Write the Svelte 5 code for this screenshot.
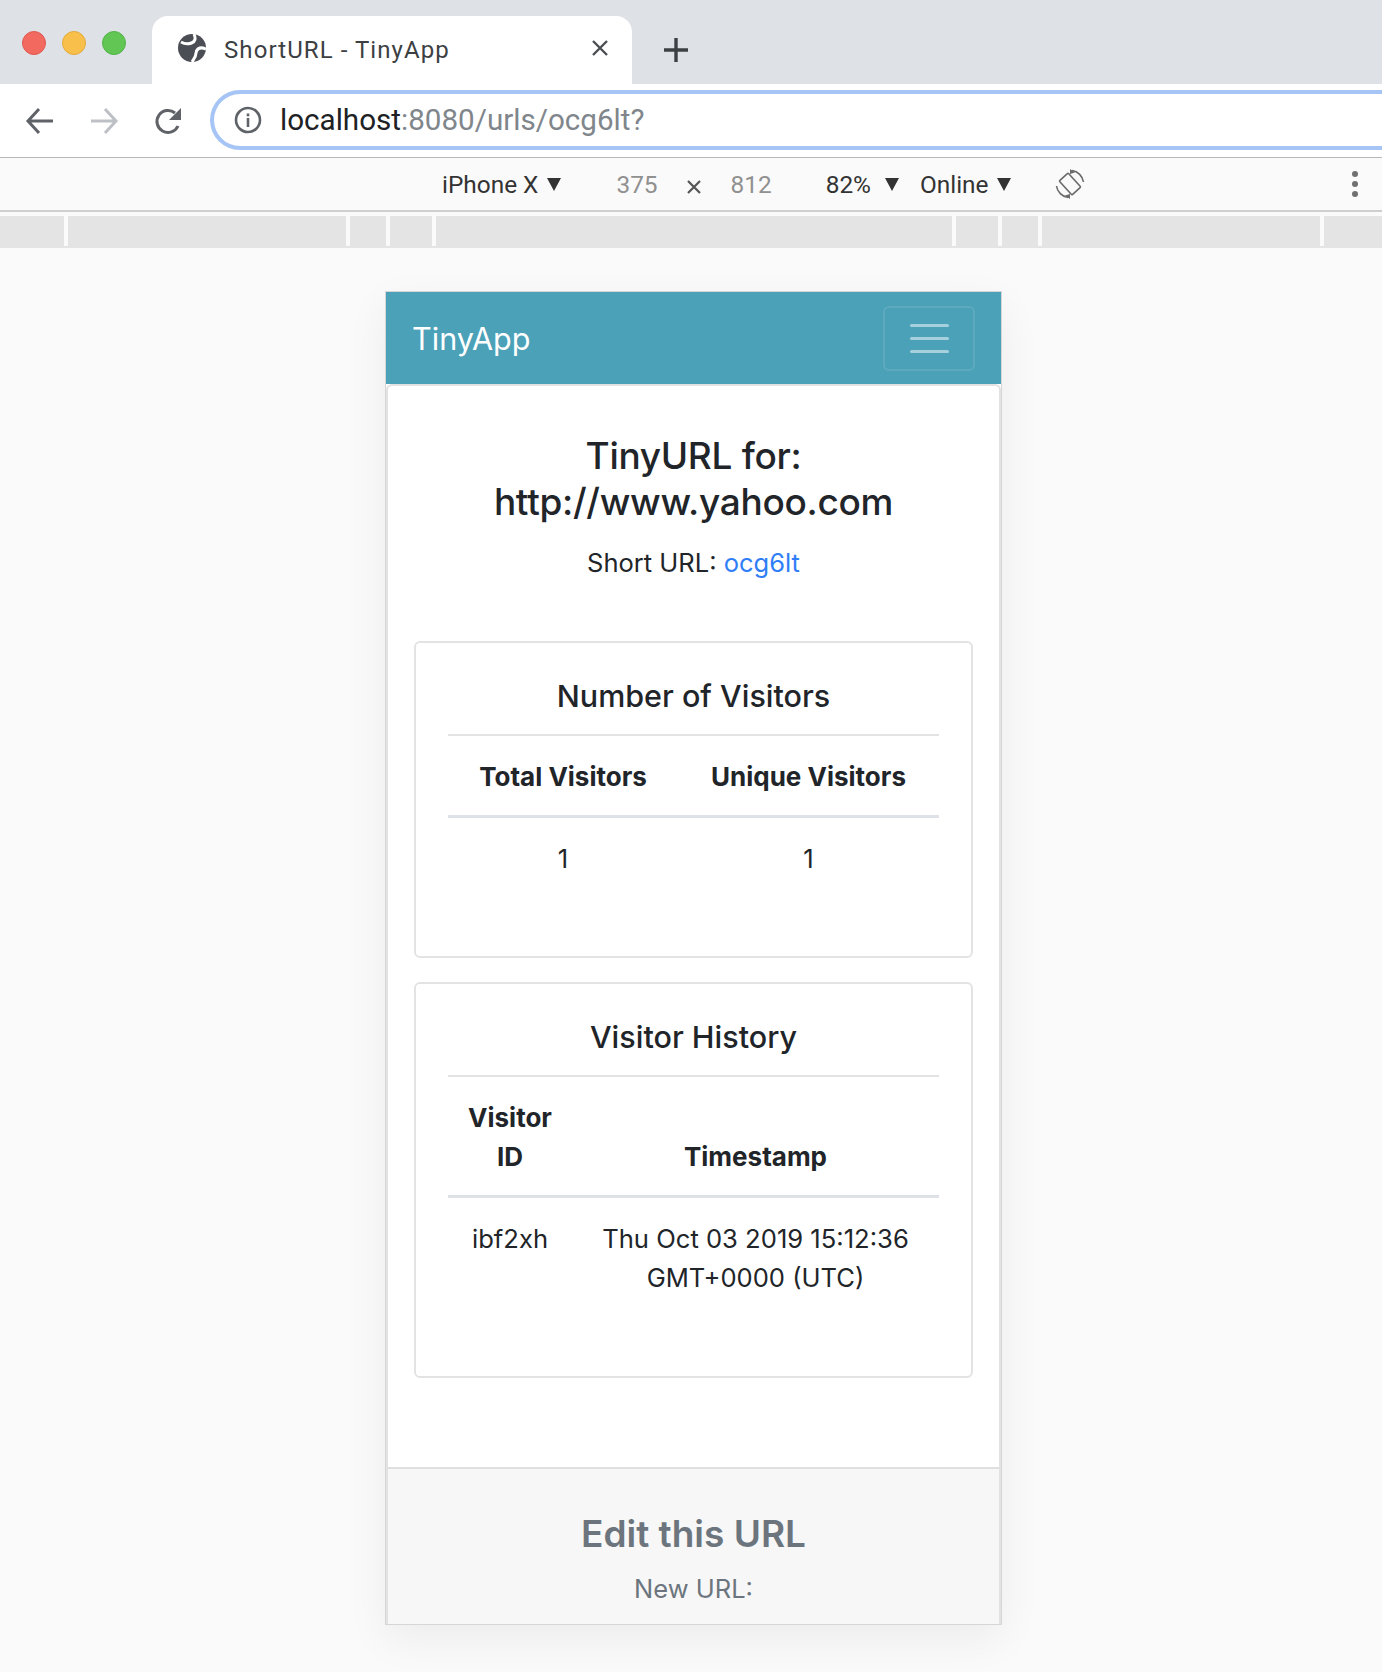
<script>
  const rulerTicks = [68, 282, 40, 46, 520, 46, 40, 282];
  const visitorCols = ['Total Visitors', 'Unique Visitors'];
</script>

<div class="page">
  <div class="tabstrip">
    <div class="lights">
      <span class="light red"></span>
      <span class="light yellow"></span>
      <span class="light green"></span>
    </div>
    <div class="tab">
      <svg class="globe" width="28" height="28" viewBox="0 0 28 28">
        <circle cx="14" cy="14" r="14" fill="#4b4e54" />
        <path d="M16 0 Q19 7 13.5 9 Q8 11 3 8" fill="none" stroke="#fff" stroke-width="3" />
        <path d="M28 15 Q21 12 18.5 17 Q18 23 14 28" fill="none" stroke="#fff" stroke-width="3" />
      </svg>
      <span class="tab-title">ShortURL - TinyApp</span>
      <svg class="tab-close" width="18" height="18" viewBox="0 0 18 18">
        <path d="M2 2 L16 16 M16 2 L2 16" stroke="#4b4e54" stroke-width="2.4" />
      </svg>
    </div>
    <svg class="plus" width="26" height="26" viewBox="0 0 26 26">
      <path d="M13 1 V25 M1 13 H25" stroke="#3c4043" stroke-width="3.4" />
    </svg>
  </div>

  <div class="toolbar">
    <svg class="nav first" width="30" height="28" viewBox="0 0 30 28">
      <path d="M28 14 H3 M14 2 L3 14 L14 26" fill="none" stroke="#5f6368" stroke-width="3" />
    </svg>
    <svg class="nav" width="30" height="28" viewBox="0 0 30 28">
      <path d="M2 14 H27 M16 2 L27 14 L16 26" fill="none" stroke="#bdc1c6" stroke-width="3" />
    </svg>
    <svg class="nav reload" width="30" height="30" viewBox="0 0 30 30">
      <path d="M24 19 A11 11 0 1 1 21 6" fill="none" stroke="#5f6368" stroke-width="3" />
      <path d="M27 1 V13 H15Z" fill="#5f6368" />
    </svg>
    <div class="omnibox">
      <svg width="28" height="28" viewBox="0 0 28 28">
        <circle cx="14" cy="14" r="12" fill="none" stroke="#5f6368" stroke-width="2.6" />
        <rect x="12.7" y="12" width="2.6" height="9" fill="#5f6368" />
        <rect x="12.7" y="7.5" width="2.6" height="2.8" fill="#5f6368" />
      </svg>
      <span class="url"><b>localhost</b>:8080/urls/ocg6lt?</span>
    </div>
  </div>

  <div class="device-bar">
    <span class="opt iphone">iPhone X</span><i class="tri"></i>
    <span class="dim w375">375</span>
    <svg class="times" width="14" height="14" viewBox="0 0 14 14">
      <path d="M1 1 L13 13 M13 1 L1 13" stroke="#555" stroke-width="2.2" />
    </svg>
    <span class="dim w812">812</span>
    <span class="opt zoom">82%</span><i class="tri zoom-tri"></i>
    <span class="opt online">Online</span><i class="tri"></i>
    <svg class="rotate" width="30" height="30" viewBox="0 0 30 30">
      <g fill="none" stroke="#6a6a6a" stroke-width="1.6">
        <rect x="9" y="5.5" width="12" height="19" rx="1" transform="rotate(-42 15 15)" />
        <path d="M17 1.5 A13.5 13.5 0 0 1 28.5 13 M13 28.5 A13.5 13.5 0 0 1 1.5 17" />
      </g>
      <path d="M15 0 L20 3.5 L15 5Z M15 30 L10 26.5 L15 25Z" fill="#6a6a6a" />
    </svg>
    <span class="dots"><i></i><i></i><i></i></span>
  </div>

  <div class="ruler">
    {#each rulerTicks as w}
      <span class="tick" style="width: {w}px"></span>
    {/each}
    <span class="tick rest"></span>
  </div>

  <div class="stage">
    <div class="device">
      <nav class="navbar">
        <span class="brand">TinyApp</span>
        <button class="toggler" aria-label="Toggle navigation">
          <i></i><i></i><i></i>
        </button>
      </nav>

      <main class="card-outer">
        <section class="card-body">
          <h2>TinyURL for:<br />http://www.yahoo.com</h2>
          <p class="short">Short URL: <a href="#top">ocg6lt</a></p>

          <div class="card first-card">
            <h3>Number of Visitors</h3>
            <table class="t-visitors">
              <thead>
                <tr>
                  {#each visitorCols as col}<th>{col}</th>{/each}
                </tr>
              </thead>
              <tbody>
                <tr><td>1</td><td>1</td></tr>
              </tbody>
            </table>
          </div>

          <div class="card second-card">
            <h3>Visitor History</h3>
            <table class="t-history">
              <thead>
                <tr><th>Visitor<br />ID</th><th>Timestamp</th></tr>
              </thead>
              <tbody>
                <tr><td>ibf2xh</td><td>Thu Oct 03 2019 15:12:36<br />GMT+0000 (UTC)</td></tr>
              </tbody>
            </table>
          </div>
        </section>

        <footer class="card-footer">
          <h3>Edit this URL</h3>
          <label for="new-url">New URL:</label>
        </footer>
      </main>
    </div>
  </div>
</div>

<style>
  :global(body) {
    margin: 0;
    background: #fafafa;
  }

  .page {
    width: 1382px;
    height: 1672px;
    overflow: hidden;
    font-family: Inter, "Liberation Sans", sans-serif;
    background: #fafafa;
    color: #212529;
  }

  .tabstrip {
    height: 84px;
    box-sizing: border-box;
    padding-top: 16px;
    background: #dee1e6;
    display: flex;
    align-items: flex-start;
  }

  .lights {
    width: 152px;
    box-sizing: border-box;
    padding: 15px 0 0 22px;
    display: flex;
    gap: 16px;
  }

  .light {
    width: 24px;
    height: 24px;
    border-radius: 50%;
    box-sizing: border-box;
  }

  .red { background: #f26a5f; border: 1px solid #e0584e; }
  .yellow { background: #f8c04b; border: 1px solid #e3a93a; }
  .green { background: #62c655; border: 1px solid #52b346; }

  .tab {
    width: 480px;
    height: 68px;
    background: #fff;
    border-radius: 16px 16px 0 0;
    display: flex;
    align-items: center;
    padding: 0 23px 0 26px;
    box-sizing: border-box;
  }

  .globe {
    margin-right: 18px;
    margin-top: -4px;
  }

  .tab-title {
    flex: 1;
    font-family: Roboto, sans-serif;
    font-size: 24px;
    letter-spacing: 1.08px;
    color: #3c4043;
    margin-top: -1px;
  }

  .tab-close {
    margin-top: -4px;
  }

  .plus {
    margin: 21px 0 0 31px;
  }

  .toolbar {
    height: 74px;
    box-sizing: border-box;
    background: #fff;
    border-bottom: 1px solid #b8b8b8;
    padding: 6px 0 0 0;
    display: flex;
    align-items: flex-start;
  }

  .nav {
    margin: 17px 0 0 34px;
  }

  .nav.first {
    margin-left: 25px;
  }

  .nav.reload {
    margin-left: 35px;
  }

  .omnibox {
    margin-left: 26px;
    flex: 1;
    height: 60px;
    box-sizing: border-box;
    border: 4px solid #a6c5f6;
    border-right: 0;
    border-radius: 30px 0 0 30px;
    display: flex;
    align-items: center;
    padding-left: 20px;
    gap: 18px;
  }

  .url {
    font-family: Roboto, sans-serif;
    font-size: 29.6px;
    color: #80868b;
  }

  .url b {
    font-weight: 400;
    color: #202124;
  }

  .device-bar {
    height: 54px;
    box-sizing: border-box;
    background: #fafafa;
    border-bottom: 2px solid #cfcfcf;
    display: flex;
    align-items: center;
    font-family: Roboto, sans-serif;
    font-size: 24.4px;
  }

  .opt { color: #333; }
  .dim { color: #909090; }

  .tri {
    width: 0;
    height: 0;
    border-left: 7px solid transparent;
    border-right: 7px solid transparent;
    border-top: 13px solid #333;
    margin-left: 9px;
  }

  .tri.zoom-tri { margin-left: 14px; }

  .iphone { margin-left: 442px; }
  .w375 { margin-left: 55px; }
  .times { margin: 6px 0 0 29px; }
  .w812 { margin-left: 30px; }
  .zoom { margin-left: 54px; }
  .online { margin-left: 21px; }
  .rotate { margin-left: 44px; }

  .dots {
    margin-left: auto;
    margin-right: 24px;
    display: flex;
    flex-direction: column;
    gap: 4px;
  }

  .dots i {
    width: 6px;
    height: 6px;
    border-radius: 50%;
    background: #707070;
  }

  .ruler {
    margin-top: 4px;
    height: 32px;
    background: #e4e4e4;
    display: flex;
  }

  .tick {
    box-sizing: border-box;
    height: 30px;
    border-right: 4px solid #fafafa;
    flex: none;
  }

  .tick.rest {
    flex: 1;
    border: 0;
  }

  .stage {
    padding: 43px 0 0 385px;
  }

  .device {
    width: 617px;
    height: 1334px;
    box-sizing: border-box;
    overflow: hidden;
    border: 1px solid #d6d6d6;
    background: #fff;
    box-shadow: 0 14px 40px rgba(0, 0, 0, 0.06);
  }

  .navbar {
    height: 92px;
    background: #4ba1b8;
    display: flex;
    align-items: center;
    justify-content: space-between;
    padding: 0 26px 0 26px;
  }

  .brand {
    color: #fff;
    font-size: 30.6px;
  }

  .toggler {
    width: 92px;
    height: 65px;
    box-sizing: border-box;
    padding: 0;
    background: transparent;
    border: 2px solid rgba(255, 255, 255, 0.1);
    border-radius: 6px;
    display: flex;
    flex-direction: column;
    align-items: center;
    justify-content: center;
    gap: 10px;
  }

  .toggler i {
    width: 39px;
    height: 3px;
    border-radius: 2px;
    background: rgba(255, 255, 255, 0.5);
  }

  .card-outer {
    border: 2px solid #e2e2e2;
    border-bottom: 0;
    height: 1241px;
    box-sizing: border-box;
    border-radius: 6px 6px 0 0;
    display: flex;
    flex-direction: column;
  }

  .card-body {
    flex: 1;
    padding: 47px 26px 0;
    text-align: center;
  }

  h2 {
    margin: 0;
    font-size: 37px;
    font-weight: 500;
    letter-spacing: -0.3px;
    line-height: 46px;
  }

  .short {
    margin: 18px 0 0;
    font-size: 25.5px;
    line-height: 39px;
  }

  .short a {
    color: #2f7ef7;
    text-decoration: none;
  }

  .card {
    box-sizing: border-box;
    border: 2px solid #e3e3e3;
    border-radius: 6px;
    padding: 33px 32px 0;
  }

  .first-card {
    margin-top: 59px;
    height: 317px;
  }

  .second-card {
    margin-top: 24px;
    height: 396px;
  }

  h3 {
    margin: 0;
    font-size: 30.5px;
    font-weight: 500;
    line-height: 40px;
  }

  table {
    width: 100%;
    border-collapse: collapse;
    table-layout: fixed;
    margin-top: 18px;
    font-size: 26px;
    line-height: 39px;
    border-top: 2px solid #e3e3e3;
  }

  th {
    font-weight: 700;
    padding: 21px 0 19px;
    vertical-align: bottom;
    border-bottom: 3px solid #dee2e6;
  }

  td {
    padding: 21px 0;
    vertical-align: top;
    font-size: 25.6px;
  }

  .t-visitors th:first-child { width: 230px; }
  .t-history th:first-child { width: 124px; }

  .card-footer {
    height: 158px;
    box-sizing: border-box;
    background: #f7f7f7;
    border-top: 2px solid #dfdfdf;
    padding-top: 42px;
    text-align: center;
    color: #6c757d;
  }

  .card-footer h3 {
    font-size: 37px;
    font-weight: 600;
    letter-spacing: 0;
    line-height: 46px;
  }

  .card-footer label {
    display: block;
    margin-top: 12px;
    font-size: 25.5px;
    line-height: 39px;
  }
</style>
